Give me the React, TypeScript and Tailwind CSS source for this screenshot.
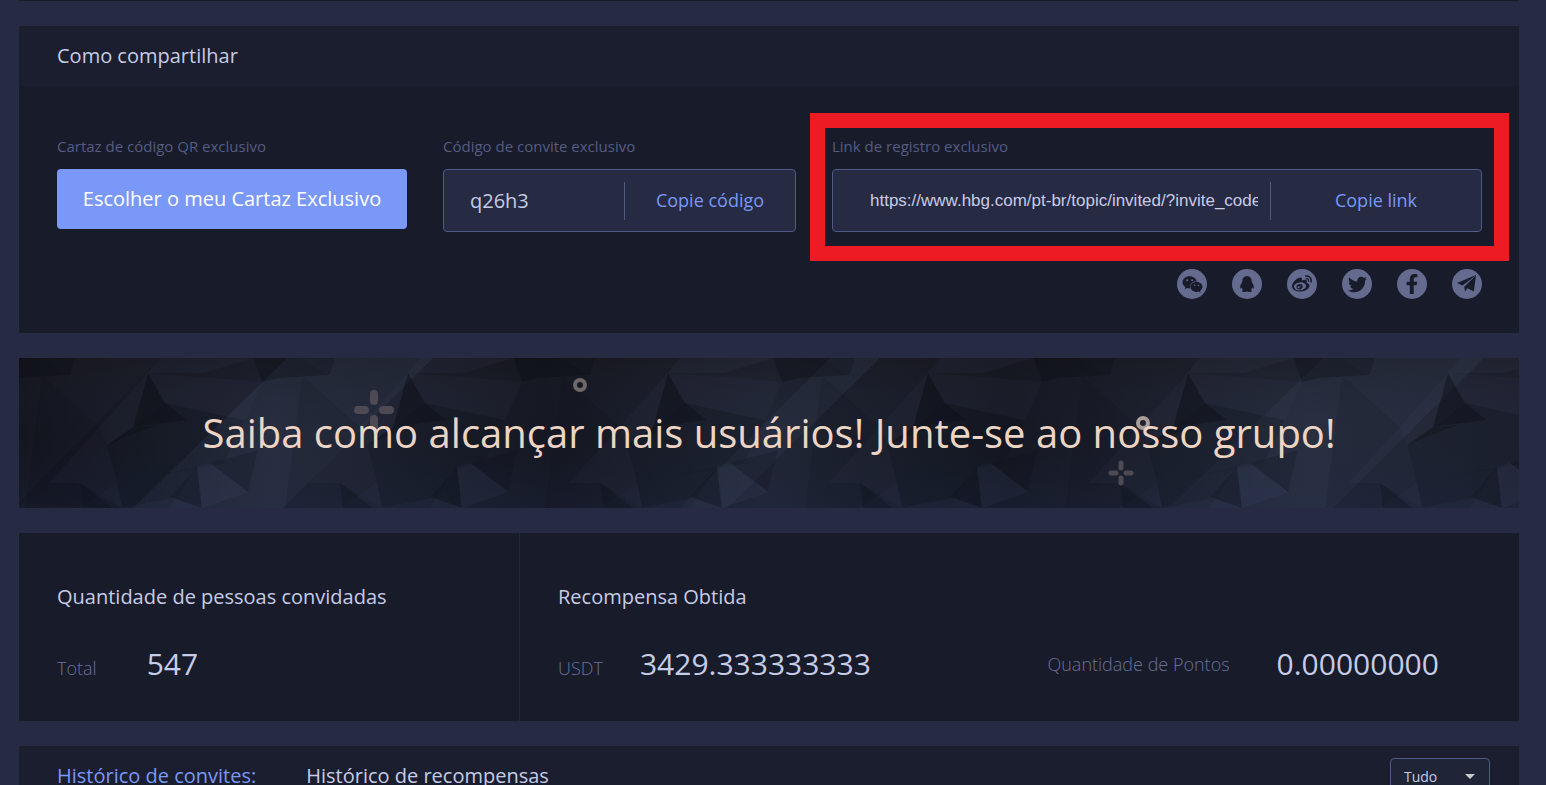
import { useState } from 'react'
import type { ReactNode } from 'react'
import { FaFacebookF, FaTwitter, FaWeibo, FaWeixin } from 'react-icons/fa'

const INVITE_CODE = 'q26h3'
const INVITE_LINK = `https://www.hbg.com/pt-br/topic/invited/?invite_code=${INVITE_CODE}`

type Social = {
  name: string
  icon: ReactNode
}

const SOCIALS: Social[] = [
  { name: 'WeChat', icon: <FaWeixin size={21} /> },
  { name: 'QQ', icon: <QqIcon /> },
  { name: 'Weibo', icon: <FaWeibo size={20} /> },
  { name: 'Twitter', icon: <FaTwitter size={19} /> },
  { name: 'Facebook', icon: <FaFacebookF size={20} /> },
  { name: 'Telegram', icon: <TelegramIcon /> },
]

const TABS = ['Histórico de convites:', 'Histórico de recompensas']

export default function App() {
  const [tab, setTab] = useState(TABS[0])

  return (
    <div className="h-screen overflow-hidden bg-[#262a42] pr-[27px] pl-[19px] font-['Open_Sans',sans-serif] text-[#c7cce6]">
      <div className="h-px bg-[#181b2a]" />

      <main className="mt-[25px] flex flex-col gap-[25px]">
        {/* ── Share ── */}
        <section className="bg-[#181b2a]">
          <h2 className="flex h-[60px] items-center bg-[#1b1e2e] px-[38px] text-[20px]">
            Como compartilhar
          </h2>

          <div className="pt-[50px] pr-[37px] pb-[34px] pl-[38px]">
            <div className="grid grid-cols-[350fr_353fr_650fr] gap-9">
              <div>
                <p className="mb-[13px] text-[15px] leading-5 text-[#565c82]">
                  Cartaz de código QR exclusivo
                </p>
                <button
                  type="button"
                  className="h-[60px] w-full rounded bg-[#7a98f7] text-[20px] text-white"
                >
                  Escolher o meu Cartaz Exclusivo
                </button>
              </div>

              <div>
                <FieldLabel htmlFor="code">Código de convite exclusivo</FieldLabel>
                <div className="flex h-[63px] items-center rounded border border-[#4e5b85] bg-[#262a42]">
                  <input
                    id="code"
                    readOnly
                    value={INVITE_CODE}
                    className="w-[180px] pl-[26px] text-[20px] outline-none"
                  />
                  <CopyButton value={INVITE_CODE}>Copie código</CopyButton>
                </div>
              </div>

              <div className="relative">
                <FieldLabel htmlFor="link">Link de registro exclusivo</FieldLabel>
                <div className="flex h-[63px] items-center rounded border border-[#4e5b85] bg-[#262a42]">
                  <input
                    id="link"
                    readOnly
                    value={INVITE_LINK}
                    className="mr-3 ml-[37px] min-w-0 flex-1 font-['Liberation_Sans',sans-serif] text-[17px] outline-none"
                  />
                  <div className="flex w-[211px]">
                    <CopyButton value={INVITE_LINK}>Copie link</CopyButton>
                  </div>
                </div>
                {/* Highlight frame */}
                <div className="pointer-events-none absolute -top-[23px] -right-[27px] -bottom-[29px] -left-[22px] border-[15px] border-[#ed1c24]" />
              </div>
            </div>

            <ul className="mt-[37px] flex justify-end gap-[25px]">
              {SOCIALS.map(s => (
                <li key={s.name}>
                  <a
                    href="#"
                    aria-label={s.name}
                    className="flex size-[30px] items-center justify-center rounded-full bg-[#656b8f] text-[#181b2a]"
                  >
                    {s.icon}
                  </a>
                </li>
              ))}
            </ul>
          </div>
        </section>

        {/* ── Banner ── */}
        <a href="#" className="relative flex h-[150px] items-center justify-center overflow-hidden">
          <BannerArt />
          <span className="relative text-[40px] text-[#ecd5c5]">
            Saiba como alcançar mais usuários! Junte-se ao nosso grupo!
          </span>
        </a>

        {/* ── Totals ── */}
        <section className="grid grid-cols-[501fr_999fr] bg-[#181b2a]">
          <div className="border-r border-[#1f2740] px-[38px] pt-[50px] pb-[35px]">
            <h3 className="text-[20px] leading-7">Quantidade de pessoas convidadas</h3>
            <div className="mt-[31px] flex items-baseline gap-[50px]">
              <Stat label="Total" value="547" />
            </div>
          </div>
          <div className="px-[38px] pt-[50px] pb-[35px]">
            <h3 className="text-[20px] leading-7">Recompensa Obtida</h3>
            <div className="mt-[31px] grid grid-cols-[490fr_434fr]">
              <div className="flex items-baseline gap-[37px]">
                <Stat label="USDT" value="3429.333333333" />
              </div>
              <div className="flex items-center gap-[47px]">
                <Stat label="Quantidade de Pontos" value="0.00000000" />
              </div>
            </div>
          </div>
        </section>

        {/* ── History ── */}
        <section className="bg-[#181b2a]">
          <div className="flex h-[60px] items-center gap-[50px] bg-[#1b1e2e] pr-[29px] pl-[38px]">
            {TABS.map(t => (
              <button
                key={t}
                type="button"
                onClick={() => setTab(t)}
                className={`text-[20px] ${t === tab ? 'text-[#7a98f7]' : ''}`}
              >
                {t}
              </button>
            ))}
            <div className="relative ml-auto">
              <select
                aria-label="Filtro"
                className="h-9 w-[100px] appearance-none rounded-sm border border-[#4e5b85] bg-[#1f2437] pl-[13px] text-[14px] outline-none"
              >
                <option>Tudo</option>
              </select>
              <svg
                viewBox="0 0 10 5"
                className="pointer-events-none absolute top-4 right-[15px] h-[5px] w-[10px]"
                aria-hidden="true"
              >
                <path d="M0 0h10L5 5z" fill="#c9c9c9" />
              </svg>
            </div>
          </div>
        </section>
      </main>
    </div>
  )
}

function FieldLabel({ htmlFor, children }: { htmlFor: string; children: ReactNode }) {
  return (
    <label htmlFor={htmlFor} className="mb-[13px] block text-[15px] leading-5 text-[#565c82]">
      {children}
    </label>
  )
}

function CopyButton({ value, children }: { value: string; children: ReactNode }) {
  return (
    <button
      type="button"
      onClick={() => navigator.clipboard.writeText(value)}
      className="h-[38px] flex-1 border-l border-[#4e5b85] text-[18px] text-[#7a98f7]"
    >
      {children}
    </button>
  )
}

function Stat({ label, value }: { label: string; value: string }) {
  return (
    <>
      <span className="text-[18px] font-light text-[#6a7199]">{label}</span>
      <span className="text-[30px] leading-[44px]">{value}</span>
    </>
  )
}

function QqIcon() {
  return (
    <svg width={30} height={30} viewBox="0 0 30 30" fill="currentColor" aria-hidden="true">
      <path d="M15 7c-3 0-4.600 2.200-4.600 5 0 .6-.7 1-.7 2.100-.9 1.300-1.700 3.200-1.500 4.900.1 1 .8.800 1.600-.4.200.9.600 1.600 1.200 2.200-1.200.5-1.200 2.200.8 2.200 1.400 0 2.400-.2 3.200-.8.800.6 1.800.8 3.200.8 2 0 2-1.700.8-2.200.6-.6 1-1.300 1.200-2.200.8 1.200 1.500 1.400 1.600.4.200-1.700-.6-3.600-1.500-4.900 0-1.100-.7-1.500-.7-2.100 0-2.800-1.600-5-4.600-5z" />
    </svg>
  )
}

function TelegramIcon() {
  return (
    <svg width={30} height={30} viewBox="0 0 30 30" fill="currentColor" aria-hidden="true">
      <path d="M24 6L5 14l5.500 2.600L22 8z" />
      <path d="M24 6L12.200 17.600l.8 4.900 2.500-3.200 6.300 3.200z" />
      <path d="M22.800 7.200L12.200 17.400" stroke="#656b8f" strokeWidth={0.6} />
    </svg>
  )
}

function BannerArt() {
  return (
    <svg
      viewBox="0 0 1500 150"
      preserveAspectRatio="xMidYMid slice"
      className="absolute inset-0 size-full"
      aria-hidden="true"
    >
      <defs>
        <linearGradient id="base">
          <stop offset="0" stopColor="#14161f" />
          <stop offset="0.17" stopColor="#232838" />
          <stop offset="0.35" stopColor="#151822" />
          <stop offset="0.5" stopColor="#212635" />
          <stop offset="0.66" stopColor="#151822" />
          <stop offset="0.86" stopColor="#242a3a" />
          <stop offset="1" stopColor="#1f2231" />
        </linearGradient>
        <linearGradient id="shade" x1="0" y1="0" x2="0" y2="1">
          <stop offset="0" stopColor="#17161a" stopOpacity="0.45" />
          <stop offset="0.5" stopColor="#1a2033" stopOpacity="0" />
          <stop offset="1" stopColor="#20294a" stopOpacity="0.3" />
        </linearGradient>
        <linearGradient id="beam">
          <stop offset="0" stopColor="#404d68" stopOpacity="0.12" />
          <stop offset="1" stopColor="#404d68" stopOpacity="0.2" />
        </linearGradient>
        {/* Faceted texture, repeats every 260px */}
        <pattern id="facets" width="260" height="150" patternUnits="userSpaceOnUse">
          <g fill="#080a12">
            <path d="M23 0l28 17 5-17z" opacity="0.25" />
            <path d="M0 0h23l28 17L0 20z" opacity="0.3" />
            <path d="M129 15l17 30 22 17-54 7z" opacity="0.35" />
            <path d="M114 69l-26 18 50-20z" opacity="0.3" />
            <path d="M146 45l80 17-22 44-106 19-10-38 26-18z" opacity="0.15" />
            <path d="M234 0l9 24 17-4V0z" opacity="0.3" />
            <path d="M178 109l-27 30 32 11z" opacity="0.25" />
            <path d="M229 134l10-42-48 13z" opacity="0.2" />
            <path d="M61 125l33 25H64z" opacity="0.25" />
            <path d="M23 17l58 52 17 56-37 25H6z" opacity="0.12" />
            <path d="M98 125l5 25h48l27-41z" opacity="0.15" />
          </g>
          <g fill="#5a6a90">
            <path d="M141 0l-12 15 55 0 50-15z" opacity="0.07" />
            <path d="M129 15l17 30 80 17 17-38z" opacity="0.05" />
            <path d="M81 69l48-54-15 54-26 18z" opacity="0.05" />
            <path d="M191 105l38 29-46 16-5-41z" opacity="0.08" />
            <path d="M81 69L30 125l31 0 42 25-5-25z" opacity="0.05" />
            <path d="M103 150l51-10 29 10z" opacity="0.07" />
          </g>
        </pattern>
      </defs>

      <rect width="1500" height="150" fill="url(#base)" />
      <rect width="1500" height="150" fill="url(#shade)" />
      <g fill="url(#beam)">
        <path d="M114 150L268 0h146L264 150z" />
        <path d="M661 150L811 0h50L708 150z" />
        <path d="M1150 150L1304 0h161L1314 150z" />
      </g>
      <path d="M0 145L141 0h127L114 150H98z" fill="#080a12" opacity="0.12" />
      <rect width="1500" height="150" fill="url(#facets)" />

      {/* Sparkles and rings */}
      <g stroke="#4d4a53" strokeLinecap="round">
        <path d="M355 36v7M355 61v7M339 52h7M364 52h7" strokeWidth="8" />
        <path d="M1102 105v5M1102 120v5M1092 115h5M1107 115h5" strokeWidth="5" />
      </g>
      <circle cx="561" cy="27" r="5" fill="none" stroke="#6f6868" strokeWidth="4" />
      <circle cx="1124" cy="65" r="5" fill="none" stroke="#a89d98" strokeWidth="4" />
    </svg>
  )
}
